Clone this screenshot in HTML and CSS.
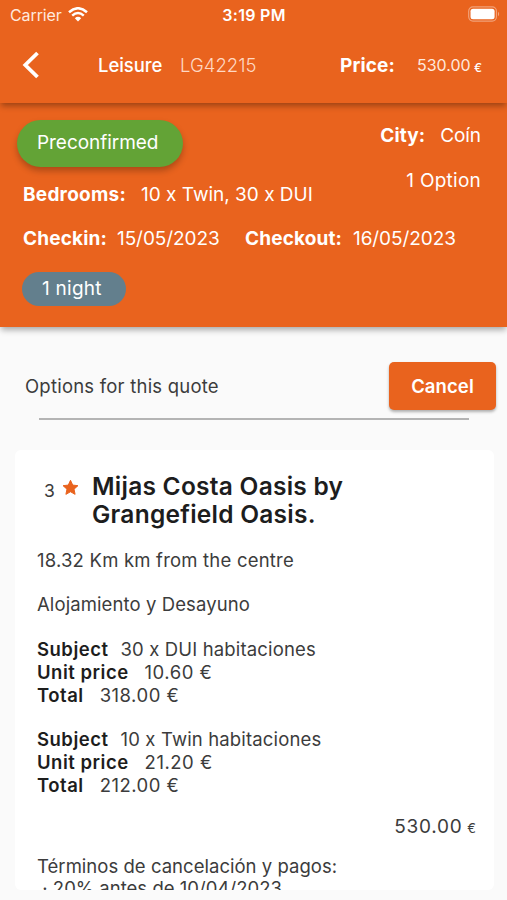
FILE: index.html
```html
<!DOCTYPE html>
<html lang="en">
<head>
<meta charset="utf-8">
<title>Quote LG42215</title>
<link rel="stylesheet" href="styles.css">
</head>
<body>
<div class="screen">
  <header class="top-bar">
    <div class="status">
      <div class="carrier"><span class="t-carrier">Carrier</span>
        <svg class="wifi" viewBox="0 0 20 15"><g fill="none" stroke="#fff" stroke-width="2.5"><path d="M1 5.3Q10-2.8 19 5.3"/><path d="M4.2 8.6Q10 3.4 15.8 8.6"/></g><path fill="#fff" d="M6.8 11.3Q10 8.4 13.2 11.3L10 14.6Z"/></svg>
      </div>
      <span class="t-clock">3:19 PM</span>
      <svg class="battery" viewBox="0 0 34 16"><rect x=".7" y=".7" width="28.6" height="14.6" rx="4.4" fill="none" stroke="#fff" stroke-opacity=".4" stroke-width="1.2"/><rect x="2.6" y="2.6" width="24.8" height="10.8" rx="2.6" fill="#fff"/><path d="M31 5.6a3.2 3.2 0 0 1 0 4.8z" fill="#fff" fill-opacity=".45"/></svg>
    </div>
    <div class="nav">
      <svg class="back" viewBox="0 0 18 28"><path d="M15.5 2 3.3 14 15.5 26" fill="none" stroke="#fff" stroke-width="3.8"/></svg>
      <span class="t-leisure">Leisure</span>
      <span class="t-code">LG42215</span>
      <b class="t-price">Price:</b>
      <span class="t-amount">530.00</span>
      <span class="t-euro">€</span>
    </div>
  </header>
  <section class="summary">
    <div class="overview">
      <div class="left">
        <span class="badge"><span class="t-badge">Preconfirmed</span></span>
        <div class="line bedrooms"><b class="t-bed">Bedrooms:</b><span class="t-rooms">10 x Twin, 30 x DUI</span></div>
      </div>
      <div class="right">
        <div class="line city"><b class="t-city">City:</b><span class="t-town">Coín</span></div>
        <div class="line option"><span class="t-option">1 Option</span></div>
      </div>
    </div>
    <div class="line dates"><b class="t-in">Checkin:</b><span class="t-date">15/05/2023</span><b class="t-out">Checkout:</b><span class="t-date">16/05/2023</span></div>
    <span class="nights"><span class="t-night">1 night</span></span>
  </section>
  <main>
    <div class="options"><span class="t-options">Options for this quote</span><button class="cancel" type="button"><span class="t-cancel">Cancel</span></button></div>
    <hr>
    <article class="card">
      <div class="hotel">
        <span class="stars">3</span>
        <svg class="star" viewBox="0 0 24 24"><path d="M12 1.8 15.1 8.6 22.5 9.4 17 14.4 18.5 21.7 12 18 5.5 21.7 7 14.4 1.5 9.4 8.9 8.6Z" fill="#e9631e" stroke="#e9631e" stroke-width="1.4" stroke-linejoin="round"/></svg>
        <h1><span class="t-h1a">Mijas Costa Oasis by</span><br><span class="t-h1b">Grangefield Oasis.</span></h1>
      </div>
      <p class="distance"><span class="t-dist">18.32 Km km from the centre</span></p>
      <p class="board"><span class="t-board">Alojamiento y Desayuno</span></p>
      <dl>
        <div class="gap-s"><dt class="t-subj">Subject</dt><dd class="t-dui">30 x DUI habitaciones</dd></div>
        <div class="gap-m"><dt class="t-unit">Unit price</dt><dd class="t-u1">10.60 €</dd></div>
        <div class="gap-m"><dt class="t-total">Total</dt><dd class="t-t1">318.00 €</dd></div>
      </dl>
      <dl>
        <div class="gap-s"><dt class="t-subj">Subject</dt><dd class="t-twin">10 x Twin habitaciones</dd></div>
        <div class="gap-m"><dt class="t-unit">Unit price</dt><dd class="t-u1">21.20 €</dd></div>
        <div class="gap-m"><dt class="t-total">Total</dt><dd class="t-t1">212.00 €</dd></div>
      </dl>
      <div class="sum"><span class="t-sum">530.00</span><span class="t-sume">€</span></div>
      <div class="terms"><span class="t-terms">Términos de cancelación y pagos:</span><br><span class="t-term1">&nbsp;· 20% antes de 10/04/2023</span></div>
    </article>
  </main>
</div>
</body>
</html>
```
FILE: styles.css
```css
* { box-sizing: border-box; }
body { margin: 0; background: #fafafa; font-family: Inter, "Liberation Sans", sans-serif; font-size: 18.5px; line-height: 23px; color: #3c3c3c; }
.screen { height: 900px; overflow: hidden; display: flex; flex-direction: column; }
span, b, dt, dd { white-space: nowrap; }
b { font-weight: 700; font-size: 19px; letter-spacing: .15px; }
svg { display: block; flex: none; }
.top-bar { position: relative; z-index: 2; height: 103px; flex: none; background: #e9631e; color: #fff; box-shadow: 0 4px 6px -1px rgba(0,0,0,.32); }
.status { height: 30px; padding: 0 8px 0 10px; display: grid; grid-template-columns: 1fr auto 1fr; align-items: center; font-size: 16px; }
.carrier { display: flex; align-items: center; gap: 6px; color: #ffe9dd; }
.t-carrier { letter-spacing: -.1px; }
.wifi { width: 20px; height: 15px; margin-top: -2px; }
.t-clock { font-weight: 600; letter-spacing: .3px; margin-right: 1px; }
.battery { width: 33px; height: 16px; justify-self: end; margin-top: -2px; margin-right: -2px; }
.nav { height: 70px; display: grid; grid-template-columns: 76px 82px 160px 77px 57px 1fr; padding-left: 22px; align-items: center; }
.back { width: 18px; height: 28px; }
.t-leisure { font-weight: 500; letter-spacing: -.05px; }
.t-code { font-weight: 300; color: #ffd8c3; letter-spacing: .05px; }
.t-amount { font-size: 16px; color: #ffe9dd; }
.t-euro { font-size: 12px; padding-top: 5px; font-weight: 500; }
.summary { position: relative; z-index: 1; height: 224px; flex: none; background: #e9631e; color: #fff; font-size: 19px; box-shadow: 0 4px 6px -1px rgba(0,0,0,.32); }
.overview { display: flex; justify-content: space-between; padding: 17px 26px 0 17px; height: 113px; }
.badge { display: flex; align-items: center; padding: 0 0 2px 20px; width: 166px; height: 47px; border-radius: 24px; background: #63a336; box-shadow: 0 4px 6px rgba(0,0,0,.25); letter-spacing: -.05px; }
.line { display: flex; }
.bedrooms { gap: 15px; margin: 16px 0 0 6px; }
.t-bed { letter-spacing: .25px; }
.t-date { letter-spacing: -.08px; }
.right { display: flex; flex-direction: column; align-items: flex-end; gap: 22px; padding-top: 4px; }
.city { gap: 15px; }
.t-town { letter-spacing: -.1px; }
.t-option, .t-night { letter-spacing: .25px; }
.dates { margin: 11px 0 0 23px; display: grid; grid-template-columns: 94px 128px 108px 1fr; }
.nights { display: flex; align-items: center; padding: 0 0 2px 20px; width: 104px; height: 34px; margin: 22px 0 0 22px; border-radius: 17px; background: #637f8d; }
main { flex: 1; min-height: 0; display: flex; flex-direction: column; }
.options { display: flex; align-items: center; justify-content: space-between; padding: 35px 11px 0 25px; }
.t-options { letter-spacing: .22px; }
.cancel { width: 107px; height: 48px; padding: 0; border: 0; border-radius: 5px; background: #e9631e; color: #fff; font: 600 18.5px/23px Inter, "Liberation Sans", sans-serif; letter-spacing: .1px; box-shadow: 0 2px 3px rgba(0,0,0,.3); }
hr { width: 430px; height: 2px; flex: none; border: 0; margin: 8px 0 0 39px; background: #b4b4b4; }
.card { margin: 30px 13px 10px 15px; flex: 1; min-height: 0; overflow: hidden; border-radius: 6px; background: #fff; padding: 22px 18px 0 22px; }
.hotel { display: grid; grid-template-columns: 18px 30px 1fr; padding-left: 7px; height: 56px; }
.stars { padding-top: 7px; font-size: 17.5px; }
.star { width: 17px; height: 17px; margin-top: 7px; }
h1 { margin: 0; font-size: 24.5px; line-height: 28px; font-weight: 600; color: #1d1d1d; letter-spacing: .25px; }
p { margin: 0; }
.distance { margin-top: 21px; letter-spacing: .2px; }
.board { margin-top: 21px; letter-spacing: .1px; }
dl { margin: 22px 0 0; }
dl + dl { margin-top: 22px; }
dl div { display: flex; height: 22.8px; }
dt { font-weight: 600; color: #1d1d1d; letter-spacing: .5px; }
dd { margin: 0; letter-spacing: .15px; }
.gap-s { gap: 12px; }
.gap-m { gap: 16px; }
.t-u1, .t-t1 { letter-spacing: .5px; }
.sum { display: flex; justify-content: flex-end; align-items: baseline; gap: 5px; margin-top: 18px; }
.t-sum { font-size: 19px; letter-spacing: .7px; }
.t-sume { font-size: 13px; }
.terms { margin-top: 15px; line-height: 22.5px; letter-spacing: .03px; }
```
